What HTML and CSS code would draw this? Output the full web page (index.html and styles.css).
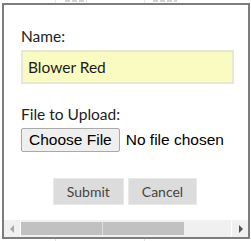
FILE: index.html
```html
<!DOCTYPE html>
<html>
<head>
<meta charset="utf-8">
<link rel="stylesheet" href="styles.css">
</head>
<body>
<div class="peek"><span class="mark m1"></span><span class="mark m2"></span></div>
<div class="frame">
  <div class="view">
    <form class="form">
      <label class="lbl" for="name">Name:</label>
      <input id="name" class="txt" type="text" value="Blower Red">
      <label class="lbl lbl-file" for="file">File to Upload:</label>
      <input id="file" class="file" type="file">
      <div class="actions">
        <button type="submit" class="btn">Submit</button>
        <button type="button" class="btn">Cancel</button>
      </div>
    </form>
  </div>
  <div class="hscroll">
    <span class="sb-btn"><i class="tri tri-l"></i></span>
    <div class="sb-track"><div class="sb-thumb"></div></div>
    <span class="sb-btn"><i class="tri tri-r"></i></span>
  </div>
</div>
</body>
</html>
```
FILE: styles.css
```css
html, body {
  margin: 0;
  padding: 0;
}
body {
  width: 251px;
  height: 241px;
  overflow: hidden;
  font-family: Lato, "Liberation Sans", sans-serif;
  background:
    linear-gradient(#e4e4e4, #e4e4e4) 55px 0 / 1px 100% no-repeat,
    linear-gradient(#e4e4e4, #e4e4e4) 144px 0 / 1px 100% no-repeat,
    #fff;
}
.peek {
  height: 3px;
  display: flex;
  align-items: flex-start;
}
.mark {
  display: block;
  height: 2px;
  background: repeating-linear-gradient(90deg, #d2d2d2 0 5px, transparent 5px 7px);
}
.m1 { margin-left: 65px; width: 22px; }
.m2 { margin-left: 66px; width: 24px; }

.frame {
  margin-left: 2px;
  width: 248px;
  height: 236px;
  box-sizing: border-box;
  border: 2px solid #7d7d7d;
  background: #fff;
  display: flex;
  flex-direction: column;
}
.view {
  flex: 1;
  overflow: hidden;
}
.form {
  margin: 0;
  padding: 22px 0 0 17px;
  display: flex;
  flex-direction: column;
  align-items: flex-start;
}
.lbl {
  font: 15.5px/18px Lato, sans-serif;
  color: #222;
}
.txt {
  margin: 5px 0 0;
  width: 213px;
  height: 34px;
  box-sizing: border-box;
  border: 2px solid #e7e7d3;
  background: #fafbc0;
  padding: 0 5px;
  font: 15.5px/18px Lato, sans-serif;
  color: #1c1c1c;
  outline: none;
}
.lbl-file {
  margin-top: 21px;
}
.file {
  margin: 5px 0 0;
  width: 220px;
  height: 24px;
  padding: 0;
  font: 15.5px "Liberation Sans", Arial, sans-serif;
  color: #000;
}
.file::file-selector-button {
  height: 24px;
  margin: 0 6px 0 0;
  padding: 0 7px;
  border: 1px solid #a9a9a9;
  border-radius: 2px;
  background: #efefef;
  font: 15.5px "Liberation Sans", Arial, sans-serif;
  color: #000;
}
.actions {
  margin-top: 26px;
  width: 208px;
  display: flex;
  justify-content: center;
  gap: 4px;
}
.btn {
  height: 27px;
  padding: 0 13px;
  border: 1px solid #e9e9e9;
  border-radius: 0;
  background: #dcdcdc;
  color: #444;
  font: 14px Lato, sans-serif;
}

.hscroll {
  height: 17px;
  display: flex;
  background: #f0f0f0;
}
.sb-btn {
  width: 16px;
  display: flex;
  align-items: center;
  justify-content: center;
}
.sb-track {
  flex: 1;
  border-left: 1px solid #fff;
  border-right: 1px solid #fff;
  padding-top: 2px;
}
.sb-thumb {
  width: 163px;
  height: 13px;
  background:
    linear-gradient(#dedede, #dedede) 81px 0 / 1px 100% no-repeat,
    #c1c1c1;
}
.tri {
  width: 0;
  height: 0;
  border-top: 4px solid transparent;
  border-bottom: 4px solid transparent;
}
.tri-l {
  border-right: 4px solid #a8a8a8;
  margin-right: 1px;
}
.tri-r {
  border-left: 4px solid #505050;
  margin-left: 1px;
}
```
